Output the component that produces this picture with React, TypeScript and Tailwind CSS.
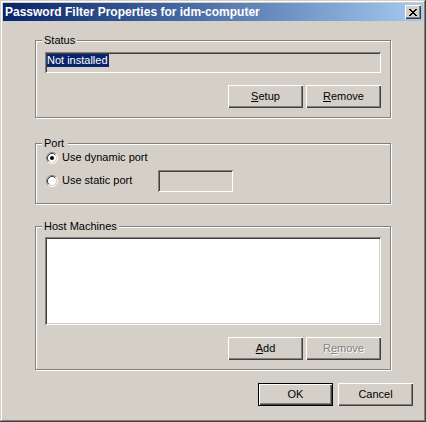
import React from "react";

const font = { fontFamily: '"Liberation Sans", Arial, sans-serif' };

function Radio({ checked }: { checked?: boolean }) {
  return (
    <svg width="12" height="12" viewBox="0 0 12 12" className="shrink-0">
      <circle cx="6" cy="6" r="4.5" fill="#ffffff" />
      <path d="M2.11 9.89 A5.5 5.5 0 0 1 9.89 2.11" stroke="#808080" fill="none" />
      <path d="M9.89 2.11 A5.5 5.5 0 0 1 2.11 9.89" stroke="#ffffff" fill="none" />
      <path d="M2.82 9.18 A4.5 4.5 0 0 1 9.18 2.82" stroke="#404040" fill="none" />
      <path d="M9.18 2.82 A4.5 4.5 0 0 1 2.82 9.18" stroke="#d4d0c8" fill="none" />
      {checked && <circle cx="6" cy="6" r="2" fill="#000000" />}
    </svg>
  );
}

function Button({
  children,
  disabled,
  isDefault,
}: {
  children: React.ReactNode;
  disabled?: boolean;
  isDefault?: boolean;
}) {
  const inner = (
    <div
      className={
        "flex items-center justify-center bg-[#d4d0c8] text-[11px] shadow-[inset_1px_1px_#ffffff,inset_-1px_-1px_#404040,inset_-2px_-2px_#808080] " +
        (isDefault ? "w-[73px] h-[21px]" : "w-[75px] h-[23px]") +
        (disabled ? " text-[#808080] [text-shadow:1px_1px_0_#ffffff]" : " text-black")
      }
    >
      {children}
    </div>
  );
  if (isDefault) {
    return <div className="border border-black w-[75px] h-[23px]">{inner}</div>;
  }
  return inner;
}

function Group({
  label,
  labelWidth,
  className,
  children,
}: {
  label: string;
  labelWidth: string;
  className: string;
  children: React.ReactNode;
}) {
  return (
    <div
      className={
        "relative ml-[32px] w-[356px] border border-[#808080] shadow-[inset_1px_1px_#ffffff,1px_1px_0_#ffffff] " +
        className
      }
    >
      <div
        className={
          "absolute left-[6px] top-[-8px] h-[14px] bg-[#d4d0c8] px-[2px] text-[11px] leading-[14px] text-black " +
          labelWidth
        }
      >
        {label}
      </div>
      {children}
    </div>
  );
}

export default function App() {
  return (
    <div
      className="relative flex h-[422px] w-[426px] flex-col bg-[#d4d0c8] p-[3px] shadow-[inset_-1px_-1px_#404040,inset_1px_1px_#d4d0c8,inset_-2px_-2px_#808080,inset_2px_2px_#ffffff]"
      style={font}
    >
      {/* Title bar */}
      <div className="flex h-[18px] items-center justify-between bg-gradient-to-r from-[#0a246a] to-[#a6caf0] pl-[2px] pr-[2px]">
        <span className="text-[12px] font-bold leading-[18px] text-white">
          Password Filter Properties for idm-computer
        </span>
        <div className="flex h-[14px] w-[16px] items-center justify-center bg-[#d4d0c8] shadow-[inset_1px_1px_#ffffff,inset_-1px_-1px_#404040,inset_-2px_-2px_#808080]">
          <svg width="8" height="7" viewBox="0 0 8 7" shapeRendering="crispEdges">
            <path d="M0 0h2v1h-2z M1 1h2v1h-2z M2 2h1v1h-1z M5 2h1v1h-1z M3 3h2v1h-2z M2 4h1v1h-1z M5 4h1v1h-1z M1 5h2v1h-2z M5 5h2v1h-2z M0 6h2v1h-2z M6 6h2v1h-2z M6 0h2v1h-2z M5 1h2v1h-2z M3 2h2v1h-2z M3 4h2v1h-2z" fill="#000" />
          </svg>
        </div>
      </div>

      {/* Status */}
      <Group label="Status" labelWidth="w-[35px]" className="mt-[19px] h-[78px] pl-[9px] pt-[11px]">
        <div className="flex h-[21px] w-[336px] items-start bg-[#d4d0c8] p-[2px] shadow-[inset_1px_1px_#808080,inset_-1px_-1px_#ffffff,inset_2px_2px_#404040,inset_-2px_-2px_#d4d0c8]">
          <span className="bg-[#0a246a] pr-[1px] text-[11px] leading-[13px] text-white">Not installed</span>
        </div>
        <div className="mt-[12px] flex w-[336px] justify-end gap-[3px]">
          <Button>
            <span>
              <span className="underline underline-offset-1">S</span>etup
            </span>
          </Button>
          <Button>
            <span>
              <span className="underline underline-offset-1">R</span>emove
            </span>
          </Button>
        </div>
      </Group>

      {/* Port */}
      <Group label="Port" labelWidth="w-[26px]" className="mt-[25px] h-[61px] pl-[10px] pt-[2px]">
        <div className="flex h-[23px] items-center gap-[4px] text-[11px] text-black">
          <Radio checked />
          <span>Use dynamic port</span>
        </div>
        <div className="flex h-[23px] items-center text-[11px] text-black">
          <Radio />
          <span className="ml-[4px] w-[96px]">Use static port</span>
          <div className="h-[22px] w-[75px] bg-[#d4d0c8] shadow-[inset_1px_1px_#808080,inset_-1px_-1px_#ffffff,inset_2px_2px_#404040,inset_-2px_-2px_#d4d0c8]" />
        </div>
      </Group>

      {/* Host Machines */}
      <Group label="Host Machines" labelWidth="w-[77px]" className="mt-[22px] h-[144px] pl-[9px] pt-[10px]">
        <div className="h-[88px] w-[336px] bg-white shadow-[inset_1px_1px_#808080,inset_-1px_-1px_#ffffff,inset_2px_2px_#404040,inset_-2px_-2px_#d4d0c8]" />
        <div className="mt-[12px] flex w-[336px] justify-end gap-[3px]">
          <Button>
            <span>
              <span className="underline underline-offset-1">A</span>dd
            </span>
          </Button>
          <Button disabled>
            <span>
              R<span className="underline underline-offset-1">e</span>move
            </span>
          </Button>
        </div>
      </Group>

      {/* OK / Cancel */}
      <div className="mt-[13px] flex justify-end gap-[5px] pr-[10px]">
        <Button isDefault>OK</Button>
        <Button>Cancel</Button>
      </div>
    </div>
  );
}
